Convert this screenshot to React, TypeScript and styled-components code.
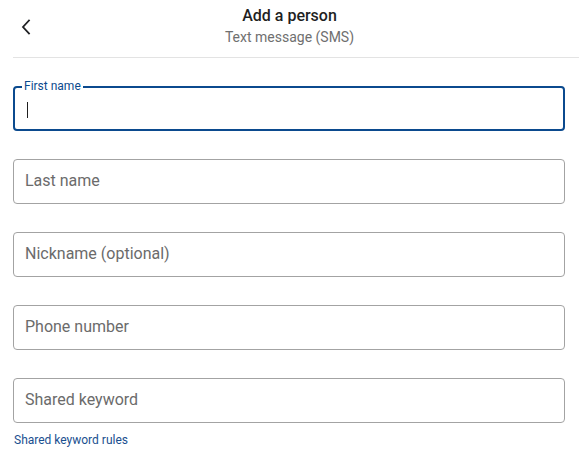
import React from "react";
import styled, { createGlobalStyle } from "styled-components";

const Global = createGlobalStyle`
  html, body { margin: 0; padding: 0; background: #ffffff; }
  body { font-family: Roboto, "Noto Sans", "Liberation Sans", Arial, sans-serif; color: #202124; }
  * { box-sizing: border-box; }
`;

const Page = styled.div`
  width: 579px;
  height: 454px;
  overflow: hidden;
  background: #fff;
`;

const Header = styled.header`
  position: relative;
  height: 58px;
  margin-left: 13px;
  border-bottom: 1px solid #e3e3e3;
  display: flex;
  flex-direction: column;
  align-items: center;
  padding-top: 6px;
  padding-right: 13px;
`;

const BackButton = styled.button`
  position: absolute;
  left: 1px;
  top: 15px;
  width: 24px;
  height: 24px;
  padding: 0;
  border: none;
  background: transparent;
  display: flex;
  align-items: center;
  justify-content: center;
  color: #202124;
`;

const Title = styled.div`
  font-size: 16px;
  font-weight: 500;
  line-height: 20px;
  color: #1f1f1f;
`;

const Subtitle = styled.div`
  font-size: 14px;
  line-height: 20px;
  margin-top: 1px;
  color: #6f6f6f;
`;

const Form = styled.div`
  display: flex;
  flex-direction: column;
  gap: 28px;
  padding: 28px 14px 0 13px;
`;

const Field = styled.div<{ $focused?: boolean }>`
  position: relative;
  height: 45px;
  border-radius: 4px;
  border: ${(p) => (p.$focused ? "2px solid #0b4a8e" : "1px solid #a3a3a3")};
  display: flex;
  align-items: center;
  padding-left: ${(p) => (p.$focused ? "11px" : "11px")};
  padding-top: ${(p) => (p.$focused ? "2px" : "0")};
  padding-bottom: ${(p) => (p.$focused ? "0" : "2px")};
`;

const FloatLabel = styled.span`
  position: absolute;
  left: 7px;
  top: -9px;
  padding: 0 2px;
  background: #fff;
  font-size: 12px;
  line-height: 14px;
  color: #0b4a8e;
`;

const Caret = styled.span`
  display: block;
  width: 1px;
  height: 16px;
  background: #1f1f1f;
  margin-left: 1px;
`;

const Placeholder = styled.span`
  font-size: 16px;
  line-height: 20px;
  color: #6b6b6b;
`;

const Help = styled.a`
  display: block;
  margin: 10px 0 0 14px;
  font-size: 12px;
  line-height: 14px;
  color: #1a4f8f;
  text-decoration: none;
`;

const fields = ["Last name", "Nickname (optional)", "Phone number", "Shared keyword"];

export default function App() {
  return (
    <Page>
      <Global />
      <Header>
        <BackButton aria-label="Back">
          <svg width="12" height="16" viewBox="0 0 12 16" fill="none">
            <path d="M9 1.5 L3 8 L9 14.5" stroke="#202124" strokeWidth="1.8" strokeLinecap="square" />
          </svg>
        </BackButton>
        <Title>Add a person</Title>
        <Subtitle>Text message (SMS)</Subtitle>
      </Header>
      <Form>
        <Field $focused>
          <FloatLabel>First name</FloatLabel>
          <Caret />
        </Field>
        {fields.map((f) => (
          <Field key={f}>
            <Placeholder>{f}</Placeholder>
          </Field>
        ))}
      </Form>
      <Help href="#">Shared keyword rules</Help>
    </Page>
  );
}
